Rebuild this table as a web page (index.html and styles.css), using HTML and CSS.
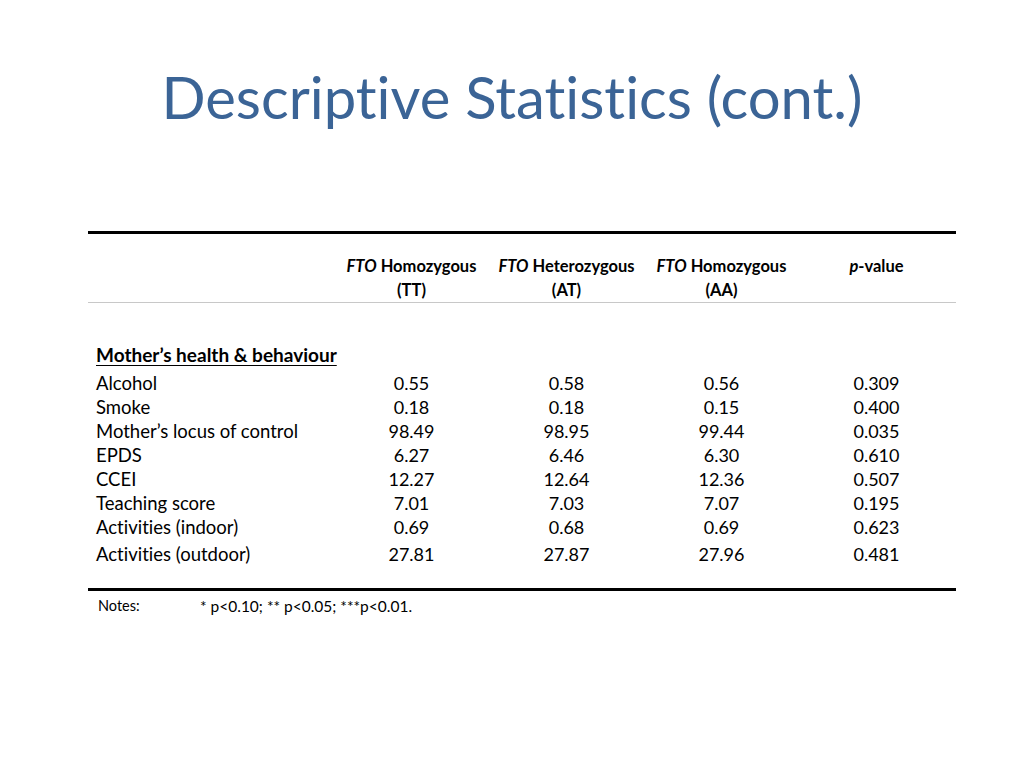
FILE: index.html
```html
<!DOCTYPE html>
<html>
<head>
<meta charset="utf-8">
<link rel="stylesheet" href="styles.css">
</head>
<body>
<div class="slide">
  <h1 class="title">Descriptive Statistics (cont.)</h1>
  <div class="table">
    <div class="head">
      <div class="lab"></div>
      <div class="col"><i>FTO</i> Homozygous<br>(TT)</div>
      <div class="col"><i>FTO</i> Heterozygous<br>(AT)</div>
      <div class="col"><i>FTO</i> Homozygous<br>(AA)</div>
      <div class="col"><i>p</i>-value</div>
    </div>
    <div class="body">
      <div class="section">Mother’s health &amp; behaviour</div>
      <div class="row"><div class="lab">Alcohol</div><div class="num">0.55</div><div class="num">0.58</div><div class="num">0.56</div><div class="num">0.309</div></div>
      <div class="row"><div class="lab">Smoke</div><div class="num">0.18</div><div class="num">0.18</div><div class="num">0.15</div><div class="num">0.400</div></div>
      <div class="row"><div class="lab">Mother’s locus of control</div><div class="num">98.49</div><div class="num">98.95</div><div class="num">99.44</div><div class="num">0.035</div></div>
      <div class="row"><div class="lab">EPDS</div><div class="num">6.27</div><div class="num">6.46</div><div class="num">6.30</div><div class="num">0.610</div></div>
      <div class="row"><div class="lab">CCEI</div><div class="num">12.27</div><div class="num">12.64</div><div class="num">12.36</div><div class="num">0.507</div></div>
      <div class="row"><div class="lab">Teaching score</div><div class="num">7.01</div><div class="num">7.03</div><div class="num">7.07</div><div class="num">0.195</div></div>
      <div class="row"><div class="lab">Activities (indoor)</div><div class="num">0.69</div><div class="num">0.68</div><div class="num">0.69</div><div class="num">0.623</div></div>
      <div class="row last"><div class="lab">Activities (outdoor)</div><div class="num">27.81</div><div class="num">27.87</div><div class="num">27.96</div><div class="num">0.481</div></div>
    </div>
    <div class="notes"><span class="nlab">Notes:</span><span class="ntext">* p&lt;0.10; ** p&lt;0.05; ***p&lt;0.01.</span></div>
  </div>
</div>
</body>
</html>
```
FILE: styles.css
```css
html, body { margin: 0; padding: 0; background: #fff; }
body { font-family: Lato, "Open Sans", sans-serif; color: #000; font-variant-ligatures: none; }
.slide { width: 1024px; height: 768px; display: flex; flex-direction: column; }
.title {
  margin: 0;
  padding-top: 62px;
  height: 231px;
  flex: none;
  box-sizing: border-box;
  text-align: center;
  font-weight: 400;
  font-size: 58px;
  line-height: 70px;
  color: #3b6496;
}
.table { margin-left: 88px; width: 868px; }
.head, .row {
  display: grid;
  grid-template-columns: 246px 155px 155px 155px 155px;
}
.head {
  border-top: 3px solid #000;
  border-bottom: 1px solid #c8c8c8;
  padding-top: 20px;
  font-weight: 700;
  font-size: 16.5px;
  line-height: 24px;
}
.head .col { text-align: center; }
.body { padding-top: 40px; padding-bottom: 22px; border-bottom: 3px solid #000; font-size: 18.5px; }
.section { padding-left: 8px; font-weight: 700; font-size: 19px; text-decoration: underline; text-underline-offset: 3px; line-height: 24px; margin-bottom: 4px; }
.row { line-height: 24px; }
.row.last { padding-top: 3px; }
.row .lab { padding-left: 8px; }
.row .num { text-align: center; font-size: 18px; }
.notes { padding-top: 6px; padding-left: 10px; font-size: 14.5px; line-height: 18px; display: flex; }
.nlab { width: 102px; }
.ntext { font-size: 15.5px; }
```
